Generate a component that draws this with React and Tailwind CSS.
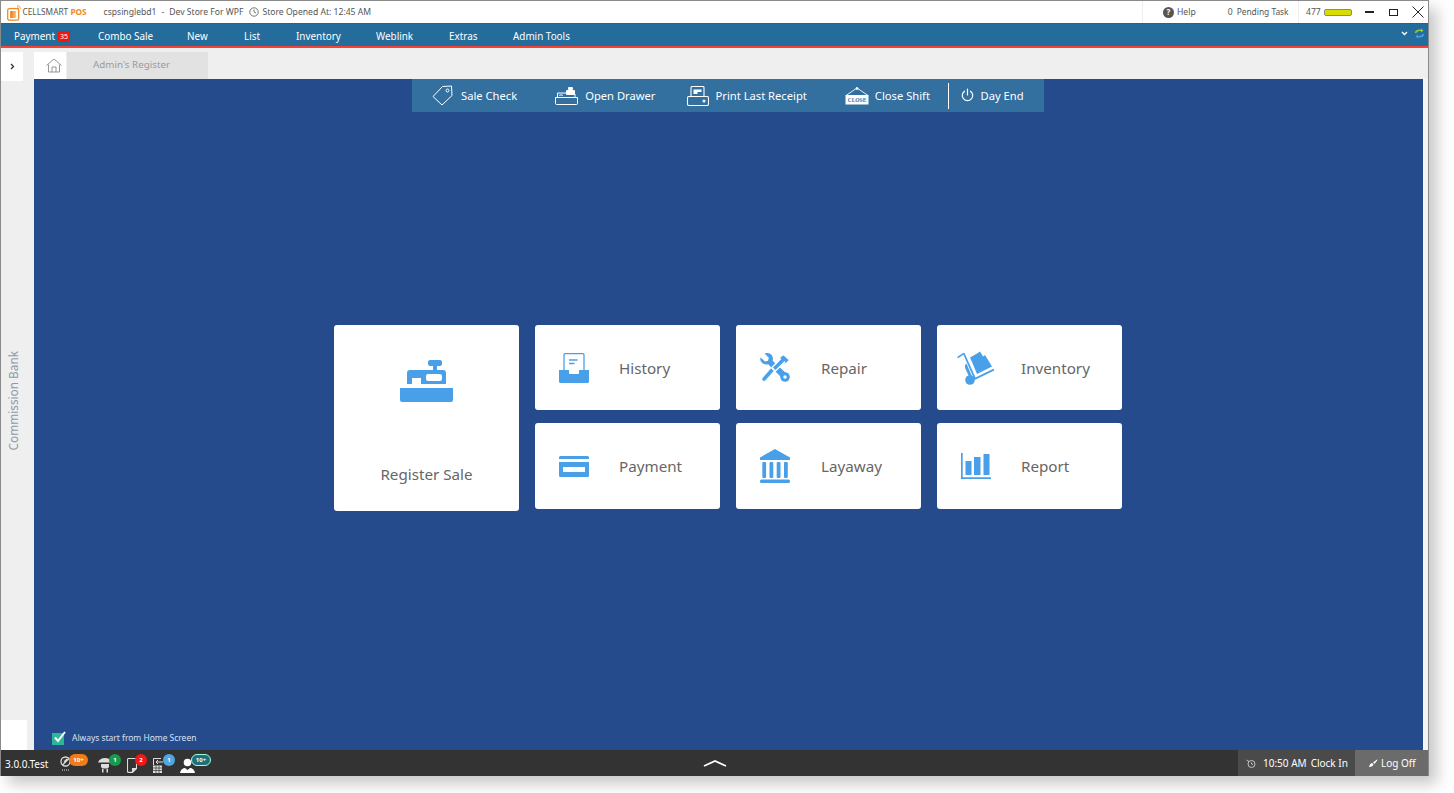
import React from "react";

const Blue = "#4aa0e8";

const RegisterIcon = () => (
  <svg width="53" height="42" viewBox="0 0 53 42" fill={Blue}>
    <path d="M0 28h53v12a2 2 0 0 1-2 2H2a2 2 0 0 1-2-2z" />
    <path fillRule="evenodd" d="M7 24V13a3 3 0 0 1 3-3h23V6h-3a2 2 0 0 1-2-2V2a2 2 0 0 1 2-2h10a2 2 0 0 1 2 2v2a2 2 0 0 1-2 2h-3v4h6a3 3 0 0 1 3 3v11H21v-6h-9v6zM28 14a2 2 0 0 0-2 2v3a2 2 0 0 0 2 2h12a2 2 0 0 0 2-2v-3a2 2 0 0 0-2-2z" />
  </svg>
);
const HistoryIcon = () => (
  <svg width="30" height="30" viewBox="0 0 30 30">
    <path d="M5 18V2a1.400 1.400 0 0 1 1.400-1.400h17.200A1.400 1.400 0 0 1 25 2v16" fill="#fff" stroke={Blue} strokeWidth="1.300" />
    <path d="M10 7h8.500M10 10.500h5.500" stroke={Blue} strokeWidth="1.300" />
    <path d="M0 17h10v3a1 1 0 0 0 1 1h8a1 1 0 0 0 1-1v-3h10v11.500a1.500 1.500 0 0 1-1.500 1.500h-27A1.500 1.500 0 0 1 0 28.500z" fill={Blue} />
  </svg>
);
const PaymentIcon = () => (
  <svg width="30" height="21" viewBox="0 0 30 21" fill={Blue}>
    <path d="M1.500 0h27A1.500 1.500 0 0 1 30 1.500V3H0V1.500A1.500 1.500 0 0 1 1.500 0z" />
    <path fillRule="evenodd" d="M0 6h30v13.500a1.500 1.500 0 0 1-1.500 1.500h-27A1.500 1.500 0 0 1 0 19.500zM4 11v5h22v-5z" />
  </svg>
);
const RepairIcon = () => (
  <svg width="30" height="29" viewBox="0 0 30 29" fill={Blue}>
    <path d="M.5 4.500 5 8.500l3-.8.800-3L4.500.5C8-1 12 .8 12.800 4.300c.3 1.200.2 2.300-.2 3.400L27 21l-4.500 4.500L8.200 11.200C4 12.500-.8 9 .5 4.500z" />
    <circle cx="25" cy="24" r="4.800" />
    <circle cx="25" cy="24" r="1.700" fill="#fff" />
    <path d="M23.500 1.500 29.500 7 27 9.800l-6 2.700-5.500 5.500-3.500-3.500 5.500-5.500L20 4z" stroke="#fff" strokeWidth="1.300" strokeLinejoin="round" />
    <path d="M21 5.500 15 11.500M25 8.500 19 14.500" stroke="#fff" strokeWidth="1.100" />
    <path d="M11 15 14 18 5.500 27.500a2 2 0 0 1-3.300-2.200z" stroke="#fff" strokeWidth="0.600" />
  </svg>
);
const InventoryIcon = () => (
  <svg width="38" height="34" viewBox="0 0 38 34" fill={Blue}>
    <path d="M0 6 6.500 1.800 7.500 3 1 7.300z" />
    <path d="M5.800 2.300 7.500 2l11 24.500 18-8.700.8 1.700-19.700 9.500z" />
    <path d="M13 6.500 20 2.500 23 0.500 26 5.500 28 4 35 15.500 20 23 15 11z" />
    <path d="M9.500 12.500c-1.800 1.200-2 3-1 5.500l4 8.500 2.500-1z" />
    <circle cx="13" cy="29" r="4.800" />
  </svg>
);
const LayawayIcon = () => (
  <svg width="30" height="34" viewBox="0 0 30 34" fill={Blue}>
    <path d="M15 0 30 8.500V11H0V8.500z" />
    <rect x="2.300" y="13" width="3.800" height="16" rx="1" />
    <rect x="9.500" y="13" width="3.800" height="16" rx="1" />
    <rect x="16.700" y="13" width="3.800" height="16" rx="1" />
    <rect x="24" y="13" width="3.800" height="16" rx="1" />
    <rect x="0" y="30.500" width="30" height="3.500" rx="1.500" />
  </svg>
);
const ReportIcon = () => (
  <svg width="30" height="26" viewBox="0 0 30 26" fill={Blue}>
    <path d="M0 0h1.700v24.300H30V26H0z" />
    <rect x="4.500" y="8" width="6" height="14" />
    <rect x="13" y="4" width="6.500" height="18" />
    <rect x="22.500" y="1" width="6" height="21" />
  </svg>
);

const Tile = ({ icon, label, iconLeft, labelLeft }) => (
  <button className="flex h-full w-full items-center rounded-[3px] bg-white text-left">
    <span className="flex shrink-0 items-center" style={{ width: labelLeft, paddingLeft: iconLeft }}>{icon}</span>
    <span className="mt-[2px] text-[15.200px] leading-none text-[#666666]">{label}</span>
  </button>
);

const W = "#ffffff";
const TagIcon = () => (
  <svg width="21" height="21" viewBox="0 0 21 21" fill="none" stroke={W} strokeWidth="1">
    <path d="M1 11.500 10.500 1.500 19.500 1l.5 9.500L10 20z" strokeLinejoin="round" />
    <circle cx="15.500" cy="5.500" r="1.500" />
  </svg>
);
const DrawerIcon = () => (
  <svg width="23" height="19" viewBox="0 0 23 19" fill="none" stroke={W} strokeWidth="1">
    <path d="M.5 11.500h22v6a1 1 0 0 1-1 1H1.500a1 1 0 0 1-1-1z" />
    <path d="M2.500 11V7h9M4.500 9.500V9h3v.5" />
    <rect x="13" y="1" width="5" height="3" rx="1" fill={W} stroke="none" />
    <rect x="11" y="4" width="9" height="5" rx="1" fill={W} stroke="none" />
    <path d="M20 8v3" />
  </svg>
);
const PrintIcon = () => (
  <svg width="22" height="20" viewBox="0 0 22 20" fill="none" stroke={W} strokeWidth="1.100">
    <path d="M4 10V1.500a1 1 0 0 1 1-1h11a1 1 0 0 1 1 1V10" />
    <path d="M6.500 3.500h8v2.500h-4v2h-4z" fill={W} stroke="none" />
    <rect x="0.500" y="10.500" width="21" height="9" rx="1.500" />
    <circle cx="17" cy="15" r="1" />
  </svg>
);
const CloseIcon = () => (
  <svg width="24" height="18" viewBox="0 0 24 18" fill="none" stroke={W} strokeWidth="0.900">
    <path d="M1 8.500 12 1l11 7.500" />
    <circle cx="12" cy="1.500" r="1" fill={W} />
    <rect x="0.500" y="8" width="23" height="9.500" fill={W} stroke="none" />
    <text x="12" y="15" fontSize="5.500" fontWeight="700" fill="#336f9f" stroke="none" textAnchor="middle" fontFamily="Liberation Serif">CLOSE</text>
  </svg>
);
const PowerIcon = () => (
  <svg width="13" height="14" viewBox="0 0 13 14" fill="none" stroke={W} strokeWidth="1.200" strokeLinecap="round">
    <path d="M6.500 1v6" />
    <path d="M3.500 3.200a5.200 5.200 0 1 0 6 0" />
  </svg>
);

const Action = ({ icon, label }) => (
  <span className="flex items-center text-[11.200px] text-white">
    {icon}
    <span className="pt-[1px]">{label}</span>
  </span>
);

const Badge = ({ className, children }) => (
  <span className={"absolute flex h-[12px] items-center justify-center rounded-full text-[6px] font-bold leading-none text-white " + className}>{children}</span>
);

export default function App() {
  const nav = [
    ["Combo Sale", "w-[89px]"],
    ["New", "w-[57px]"],
    ["List", "w-[52px]"],
    ["Inventory", "w-[80px]"],
    ["Weblink", "w-[73px]"],
    ["Extras", "w-[64px]"],
    ["Admin Tools", "w-[60px]"],
  ];
  return (
    <div className="h-[793px] w-[1454px] overflow-hidden bg-white font-['Noto_Sans','Open_Sans',sans-serif]">
      <div className="flex h-[776px] w-[1429px] flex-col border border-b-0 border-[#8a8a8a] bg-[#efefef] shadow-[8px_8px_14px_rgba(0,0,0,0.22)]">
        {/* title bar */}
        <div className="flex h-[22px] shrink-0 items-center bg-white text-[8.600px] text-[#555555]">
          <svg className="ml-[6px]" width="15" height="17" viewBox="0 0 15 17" fill="none">
            <rect x="0.700" y="4.700" width="11" height="11.500" rx="1.500" stroke="#f08a24" strokeWidth="1.300" />
            <rect x="3.200" y="7" width="5.500" height="7" fill="#f4a860" />
            <rect x="3.200" y="7" width="2.500" height="7" fill="#f08a24" />
            <path d="M10 1.500a3.500 3.500 0 0 1 3.500 3.500M10 3.500a1.500 1.500 0 0 1 1.500 1.500" stroke="#f08a24" strokeWidth="0.800" />
          </svg>
          <span className="ml-[0.500px] w-[69px] text-[8.300px] text-[#555555]">CELLSMART <b className="text-[#f08a24]">POS</b></span>
          <span className="ml-[12px]">cspsinglebd1</span>
          <span className="ml-[5px]">-</span>
          <span className="ml-[5px]">Dev Store For WPF</span>
          <svg className="ml-[6px]" width="10" height="10" viewBox="0 0 10 10" fill="none" stroke="#555555" strokeWidth="0.800">
            <circle cx="5" cy="5" r="4.200" />
            <path d="M5 2.500V5l2 1" />
          </svg>
          <span className="ml-[3px]">Store Opened At: 12:45 AM</span>
          <span className="ml-auto flex h-full w-[156px] items-center border-l border-[#eeeeee] pl-[20px]">
            <span className="flex h-[11px] w-[11px] items-center justify-center rounded-full bg-[#555555] text-[8px] font-bold leading-none text-white">?</span>
            <span className="ml-[3px]">Help</span>
            <span className="ml-[32px]">0</span>
            <span className="ml-[4px] text-[8.400px]">Pending Task</span>
          </span>
          <span className="flex h-full w-[130px] items-center border-l border-[#eeeeee]">
            <span className="ml-[7px]">477</span>
            <span className="ml-[3px] h-[7px] w-[28px] rounded-[2px] border border-[#888888] bg-[#d8dc00]" />
            <span className="ml-[13px] h-[2px] w-[9px] bg-[#222222]" />
            <span className="ml-[15px] h-[7px] w-[9px] border-[1.500px] border-[#222222]" />
            <svg className="ml-[14px]" width="12" height="12" viewBox="0 0 12 12" stroke="#222222" strokeWidth="1">
              <path d="M.5.500l11 11M11.500.500l-11 11" />
            </svg>
          </span>
        </div>
        {/* menu */}
        <div className="flex h-[23px] shrink-0 items-center border-t border-[#1f6593] bg-[#246c9b] pt-[3px] text-[9.900px] text-white">
          <span className="ml-[13px] flex w-[84px] items-center">
            Payment
            <span className="ml-[3px] flex h-[11px] w-[12px] items-center justify-center rounded-[1px] bg-[#f01808] text-[7px] leading-none">35</span>
          </span>
          {nav.map(([n, c]) => (
            <span key={n} className={c + " whitespace-nowrap"}>{n}</span>
          ))}
          <svg className="ml-auto mb-[6px]" width="7" height="5" viewBox="0 0 7 5" fill="none" stroke="#fff" strokeWidth="1.400">
            <path d="M1 1l2.500 2.500L6 1" />
          </svg>
          <svg className="ml-[6px] mr-[3px] mb-[6px]" width="11" height="11" viewBox="0 0 11 11" fill="none" strokeWidth="1.500">
            <path d="M1.500 5c.5-2 2.500-3 6-2.500" stroke="#9ac83c" />
            <path d="M7 .5 9.500 2.500 7 4.500z" fill="#9ac83c" />
            <path d="M9.500 6c-.5 2-2.500 3-6 2.500" stroke="#4aa0e8" />
            <path d="M4 6.500 1.500 8.500 4 10.500z" fill="#4aa0e8" />
          </svg>
        </div>
        <div className="h-[2px] shrink-0 bg-[#f44336]" />
        {/* body */}
        <div className="flex min-h-0 flex-1">
          {/* left rail */}
          <div className="flex w-[33px] shrink-0 flex-col">
            <div className="mt-[4px] flex h-[29px] w-[22px] items-center justify-center bg-white">
              <svg width="5" height="7" viewBox="0 0 5 7" fill="none" stroke="#333" strokeWidth="1.300">
                <path d="M1 1l2.500 2.500L1 6" />
              </svg>
            </div>
            <div className="flex min-h-0 flex-1 items-center justify-center pr-[8px]">
              <span className="rotate-180 text-[11.800px] leading-none text-[#8c9aa8] [writing-mode:vertical-rl]">Commission Bank</span>
            </div>
            <div className="h-[30px] w-[26px] bg-white" />
          </div>
          {/* content */}
          <div className="flex min-w-0 flex-1 flex-col">
            <div className="flex h-[31px] shrink-0 items-end">
              <div className="flex h-[27px] w-[32px] items-center justify-center bg-white pl-[7px]">
                <svg width="16" height="15" viewBox="0 0 16 15" fill="none" stroke="#8a8a8a" strokeWidth="0.900">
                  <path d="M.5 7.500 8 1l7.500 6.500M2.500 6.500V14h11V6.500M6 14V9h4v5" />
                </svg>
              </div>
              <div className="ml-[1px] flex h-[27px] w-[141px] items-center justify-center bg-[#e2e2e2] pr-[12px] text-[9.800px] text-[#9a9a9a]">Admin's Register</div>
            </div>
            <div className="flex min-h-0 flex-1">
              <main className="flex min-w-0 flex-1 flex-col items-center bg-[#264b8c] pr-[1px]">
                <div className="relative flex h-[33px] w-[632px] shrink-0 items-center bg-[#336f9f]">
                  <Action icon={<span className="ml-[20px] mr-[8px] flex"><TagIcon /></span>} label="Sale Check" />
                  <Action icon={<span className="ml-[38px] mr-[7px] flex"><DrawerIcon /></span>} label="Open Drawer" />
                  <Action icon={<span className="ml-[31px] mr-[7px] flex"><PrintIcon /></span>} label="Print Last Receipt" />
                  <Action icon={<span className="ml-[38px] mr-[6px] flex"><CloseIcon /></span>} label="Close Shift" />
                  <span className="ml-[18px] h-[26px] w-[1.500px] bg-white" />
                  <Action icon={<span className="ml-[12px] mr-[6px] flex"><PowerIcon /></span>} label="Day End" />
                </div>
                <div className="mt-[213px] grid shrink-0 grid-cols-[185px_185px_185px_185px] grid-rows-[85px_13px_86px] gap-x-[16px]">
                  <button className="row-span-3 flex h-[186px] flex-col items-center rounded-[3px] bg-white">
                    <span className="mt-[35px] flex"><RegisterIcon /></span>
                    <span className="mt-[65px] text-[15.200px] leading-none text-[#666666]">Register Sale</span>
                  </button>
                  <Tile icon={<HistoryIcon />} label="History" iconLeft={24} labelLeft={84} />
                  <Tile icon={<RepairIcon />} label="Repair" iconLeft={24} labelLeft={85} />
                  <Tile icon={<InventoryIcon />} label="Inventory" iconLeft={20} labelLeft={84} />
                  <span className="col-span-3 col-start-2" />
                  <Tile icon={<PaymentIcon />} label="Payment" iconLeft={24} labelLeft={84} />
                  <Tile icon={<LayawayIcon />} label="Layaway" iconLeft={24} labelLeft={85} />
                  <Tile icon={<ReportIcon />} label="Report" iconLeft={24} labelLeft={84} />
                </div>
                <div className="mt-auto mb-[5px] flex items-center self-start pl-[18px] text-[8.450px] text-[#d7e2ef]">
                  <span className="relative h-[12px] w-[12px] bg-[#2bb89a]">
                    <svg className="absolute -top-[2px] left-[1px]" width="13" height="13" viewBox="0 0 13 13" fill="none" stroke="#fff" strokeWidth="2">
                      <path d="M2 6.500 5 10l7-9" />
                    </svg>
                  </span>
                  <span className="ml-[8px]">Always start from Home Screen</span>
                </div>
              </main>
              <div className="w-[5px] shrink-0 bg-[#f4f4f4]" />
            </div>
          </div>
        </div>
        {/* status bar */}
        <div className="flex h-[26px] shrink-0 items-center bg-[#333333] text-white">
          <span className="ml-[4px] mt-[2px] w-[54px] text-[10px]">3.0.0.Test</span>
          <span className="relative mt-[2px] h-[18px] w-[14px]">
            <svg width="14" height="18" viewBox="0 0 14 18" fill="none" stroke="#ddd" strokeWidth="1.300">
              <circle cx="6.500" cy="6.500" r="4.500" />
              <path d="M3.500 10 10 3.500M5 7l3-3" />
              <path d="M3 15h7" strokeWidth="1" strokeDasharray="1 1" />
            </svg>
            <Badge className="-top-[1px] left-[10px] w-[19px] bg-[#ef7c1a]">10+</Badge>
          </span>
          <span className="relative ml-[25px] mt-[3px] h-[16px] w-[14px]">
            <svg width="14" height="16" viewBox="0 0 14 16" fill="#dddddd">
              <path d="M0 5.500C1 2.500 3.500 1 7 1s6 1.500 7 4.500z" />
              <path d="M3 7h8v3l-1.500 1.500h-5L3 10z" />
              <path d="M4 12h1.500v3.500H4zM8.500 12H10v3.500H8.500z" />
            </svg>
            <Badge className="-top-[3px] left-[11px] w-[12px] bg-[#179a4a]">1</Badge>
          </span>
          <span className="relative ml-[15px] mt-[5px] h-[15px] w-[10px]">
            <svg className="block" width="10" height="15" viewBox="0 0 10 15" fill="none" stroke="#dddddd" strokeWidth="1.100">
              <path d="M5.500 14.400H1.500a1 1 0 0 1-1-1V1.500a1 1 0 0 1 1-1h7a1 1 0 0 1 1 1v9" />
              <path d="M9.500 10.500 5.500 14.400v-3.900z" fill="#dddddd" />
            </svg>
            <Badge className="-top-[4px] left-[8px] w-[12px] bg-[#f01818]">2</Badge>
          </span>
          <span className="relative ml-[16px] mt-[5px] h-[15px] w-[9px]">
            <svg className="block" width="10" height="15" viewBox="0 0 10 15">
              <path d="M.5 7V.5H8" fill="none" stroke="#dddddd" />
              <path d="M3 4h7M5 2 3 4l2 2" fill="none" stroke="#dddddd" />
              <rect x="0" y="7.500" width="9" height="7.500" fill="#dddddd" />
              <path d="M3 7.500V15M6 7.500V15M0 10h9M0 12.500h9" stroke="#333" strokeWidth="0.700" />
            </svg>
            <Badge className="-top-[4px] left-[10px] w-[12px] bg-[#53a7e0]">1</Badge>
          </span>
          <span className="relative ml-[18px] mt-[5px] h-[15px] w-[15px]">
            <svg className="block" width="15" height="15" viewBox="0 0 15 15" fill="#ffffff">
              <circle cx="7.500" cy="4.500" r="3.800" />
              <path d="M0 15c.5-3.500 3-5 5-5l2.500 2 2.500-2c2 0 4.500 1.500 5 5z" />
            </svg>
            <Badge className="-top-[4px] left-[11px] w-[20px] border border-[#9fd] bg-[#1f6f78]">10+</Badge>
          </span>
          <svg className="ml-[508px]" width="24" height="8" viewBox="0 0 24 8" fill="none" stroke="#fff" strokeWidth="1.800">
            <path d="M1 7 12 2l11 5" />
          </svg>
          <div className="ml-auto flex h-full w-[117px] items-center bg-[#4a4a4a] pl-[8px] text-[10px]">
            <svg width="10" height="9" viewBox="0 0 10 9" fill="none" stroke="#ddd" strokeWidth="0.800">
              <circle cx="5.500" cy="5" r="3.500" />
              <path d="M.5 1 3 2.500M5.500 3.500V5L7 5.500" />
            </svg>
            <span className="ml-[7px]">10:50 AM</span>
            <span className="ml-[4px]">Clock In</span>
          </div>
          <div className="flex h-full w-[73px] items-center bg-[#6b6b6b] pl-[14px] text-[10px]">
            <svg width="9" height="9" viewBox="0 0 9 9" fill="#fff">
              <path d="M0 8c.5-2 1.500-3.500 3-4l1.500 1.500C4 7 2.500 8 0 8zM4 3.500 8 .5l.5.500-3 4z" />
            </svg>
            <span className="ml-[3px]">Log Off</span>
          </div>
        </div>
      </div>
    </div>
  );
}
